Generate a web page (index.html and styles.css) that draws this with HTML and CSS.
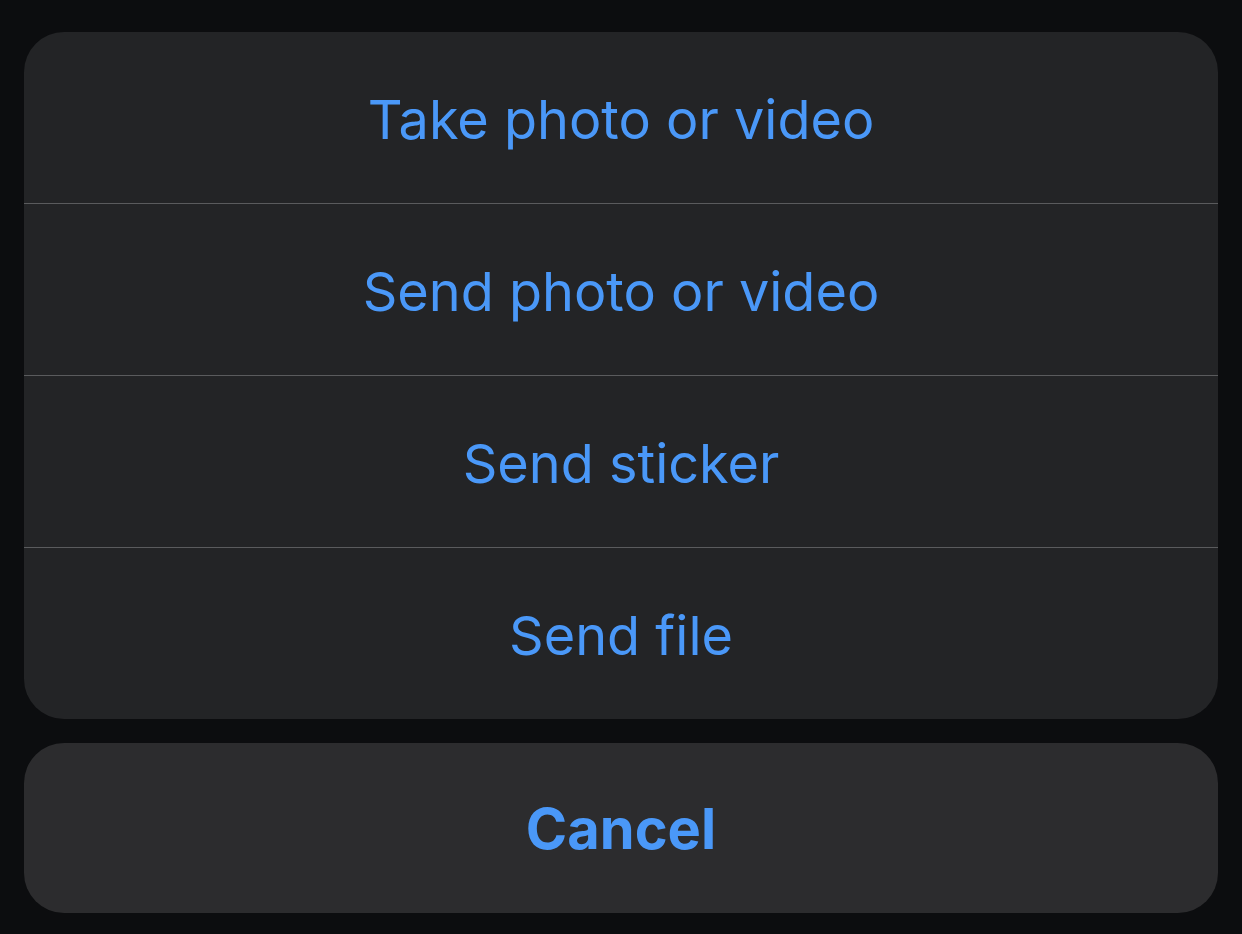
FILE: index.html
```html
<!DOCTYPE html>
<html>
<head>
<meta charset="utf-8">
<link rel="stylesheet" href="styles.css">
</head>
<body>
<div class="sheet">
  <div class="group">
    <div class="row">Take photo or video</div>
    <div class="row">Send photo or video</div>
    <div class="row">Send sticker</div>
    <div class="row">Send file</div>
  </div>
  <div class="cancel">Cancel</div>
</div>
</body>
</html>
```
FILE: styles.css
```css
html, body {
  margin: 0;
  padding: 0;
  background: #0c0d0f;
  width: 1242px;
  height: 934px;
  overflow: hidden;
}
.sheet {
  padding: 32px 24px 0 24px;
  display: flex;
  flex-direction: column;
  gap: 24px;
  font-family: Inter, "Liberation Sans", sans-serif;
}
.group {
  background: #232426;
  border-radius: 40px;
  overflow: hidden;
  display: flex;
  flex-direction: column;
}
.row {
  height: 171px;
  box-sizing: border-box;
  padding-top: 3px;
  display: flex;
  align-items: center;
  justify-content: center;
  color: #4a98f8;
  font-size: 54px;
}
.row + .row {
  height: 172px;
  border-top: 1px solid #5a5b5d;
}
.cancel {
  height: 170px;
  box-sizing: border-box;
  padding-top: 2px;
  background: #2c2c2e;
  border-radius: 40px;
  display: flex;
  align-items: center;
  justify-content: center;
  color: #4a98f8;
  font-size: 56px;
  font-weight: 700;
}
```
